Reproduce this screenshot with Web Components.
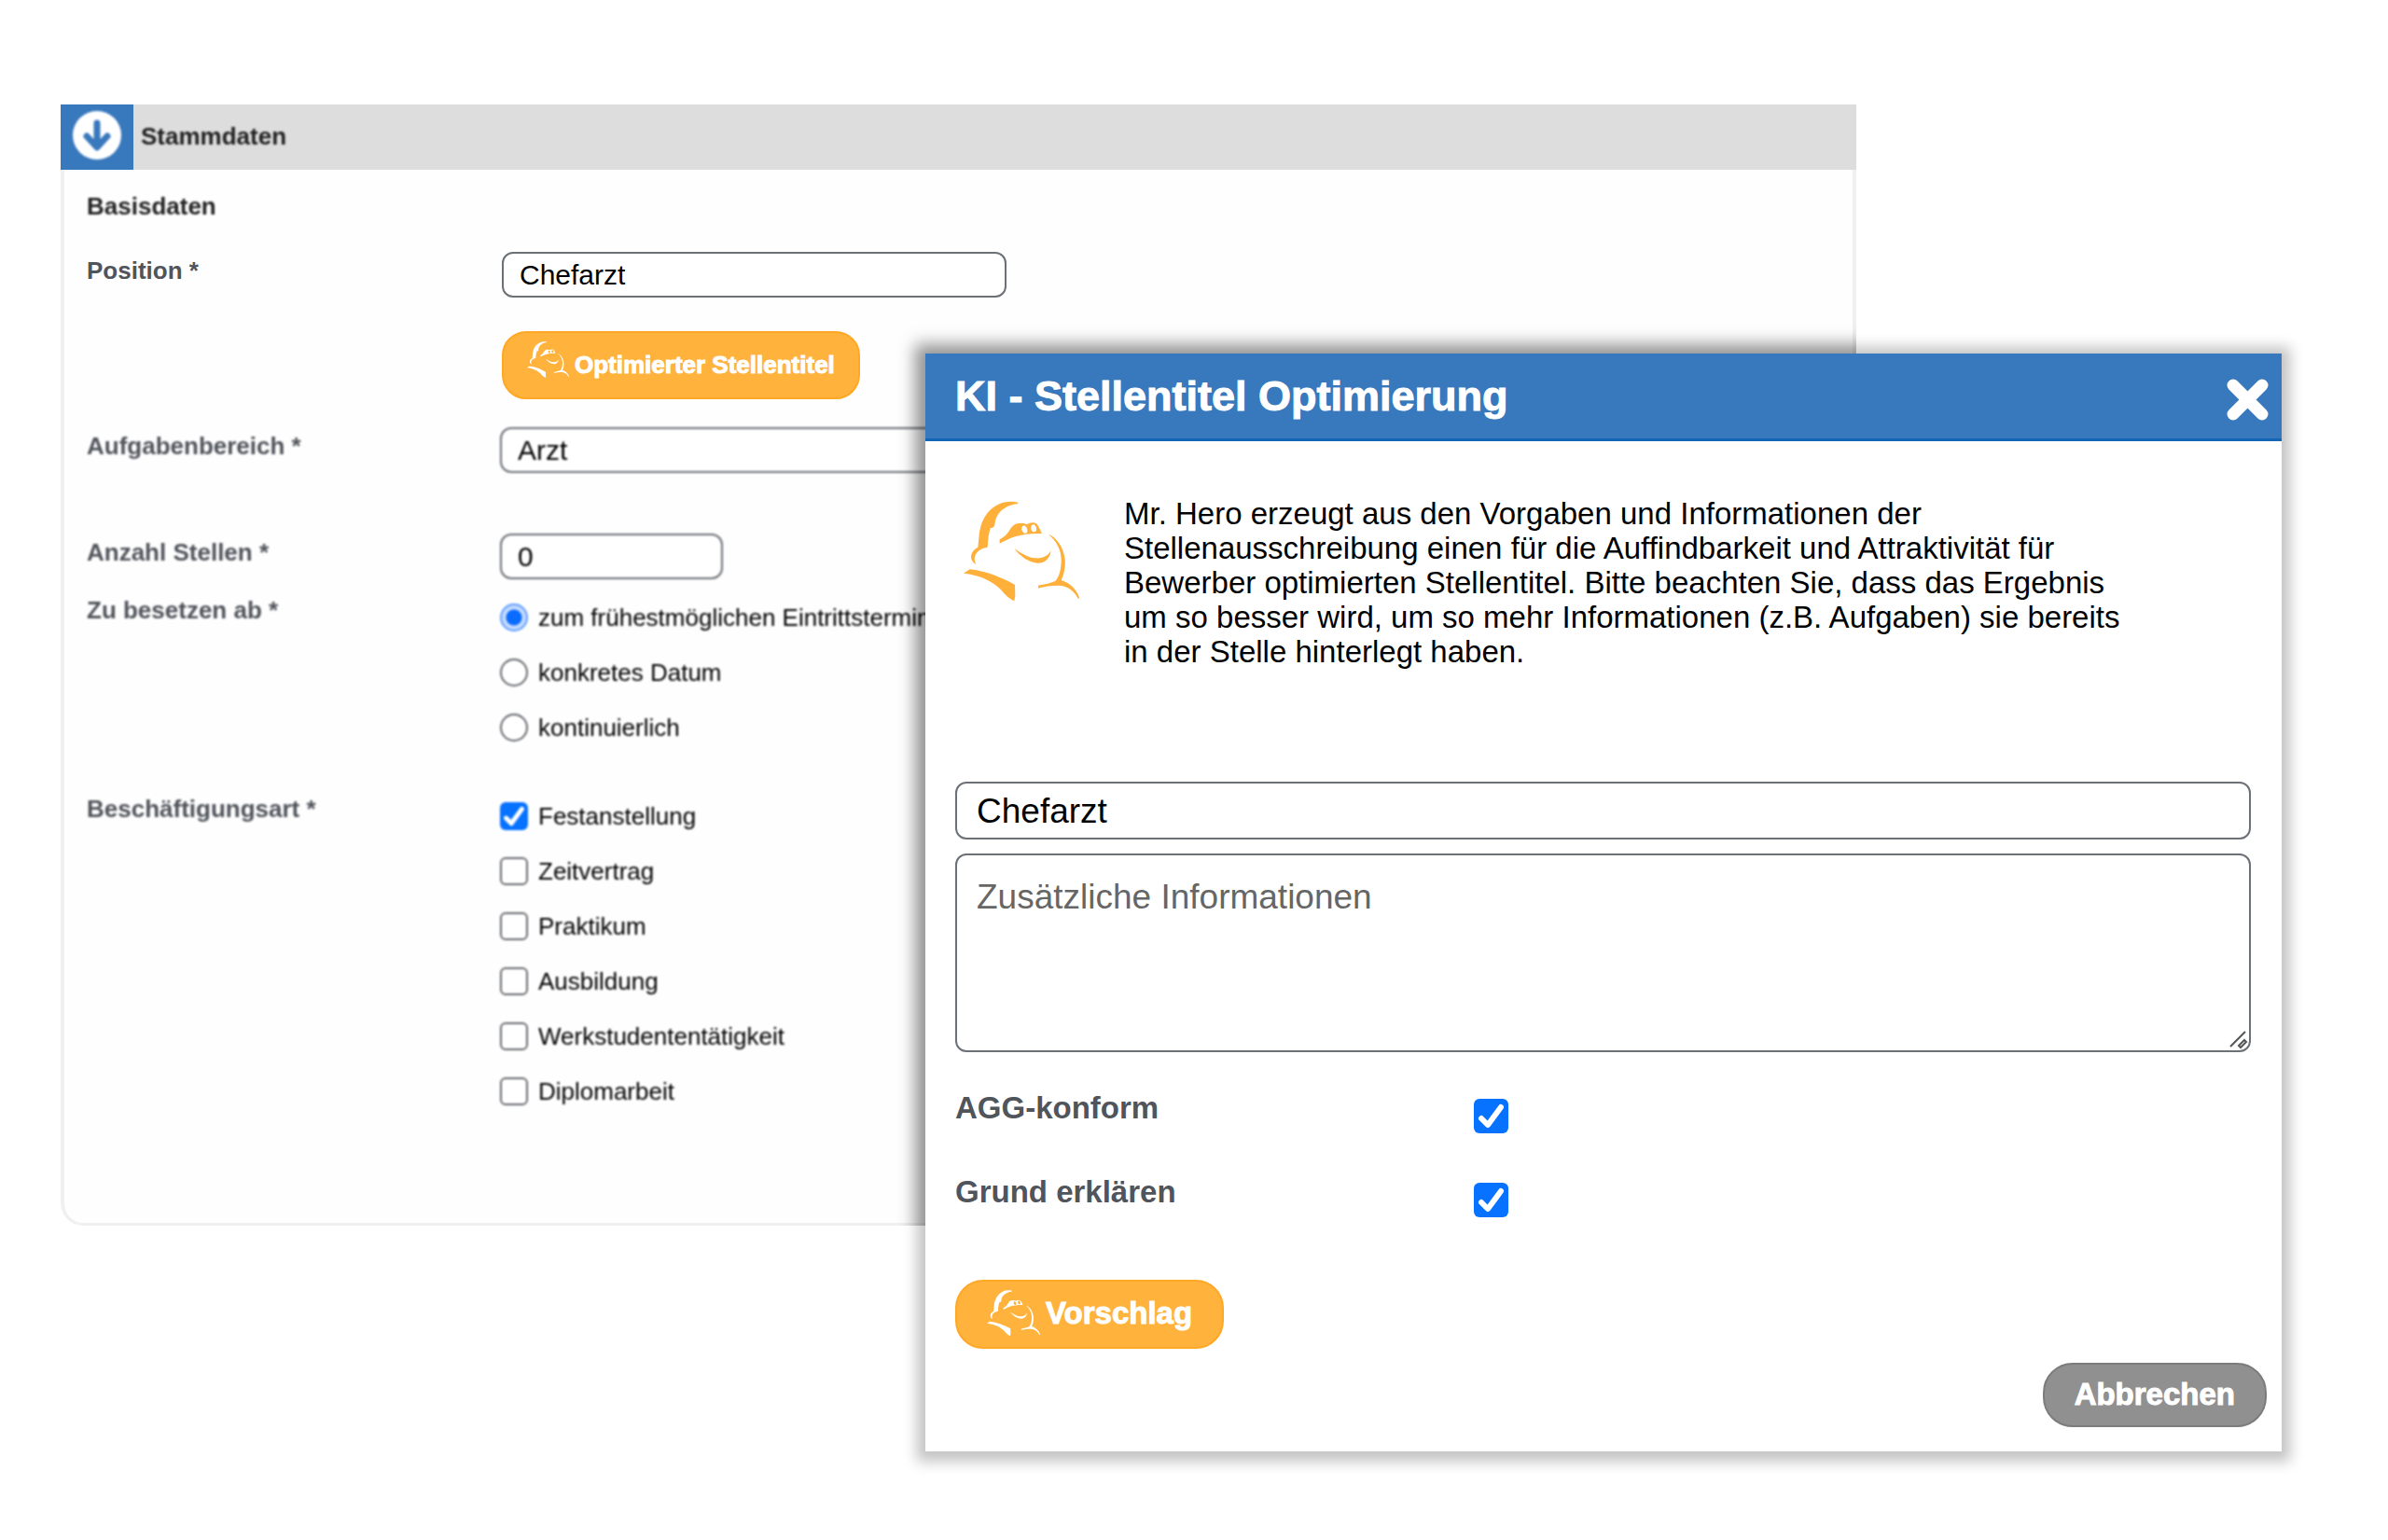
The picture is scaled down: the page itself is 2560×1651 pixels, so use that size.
<!DOCTYPE html>
<html lang="de">
<head>
<meta charset="utf-8">
<title>Stammdaten</title>
<style>
  body {
    margin: 0;
    min-height: 100vh;
    position: relative;
    background: #fff;
    color: #000;
    font-family: "Liberation Sans", Arial, sans-serif;
  }
  main {
    padding: 112px 65px;
  }
  .indent {
    margin: 36px 0 0 445px;
  }
</style>
</head>
<body>

<main>
  <data-panel heading="Stammdaten" subheading="Basisdaten">
    <text-row value="Chefarzt" style="margin-top: 34px">Position *</text-row>
    <hero-button class="indent" size="small">Optimierter Stellentitel</hero-button>
    <text-row type="select" value="Arzt" soft style="margin-top: 30px">Aufgabenbereich *</text-row>
    <text-row size="short" value="0" soft style="margin-top: 65px">Anzahl Stellen *</text-row>
    <choice-group type="radio" value="zum frühestmöglichen Eintrittstermin"
      options="zum frühestmöglichen Eintrittstermin|konkretes Datum|kontinuierlich"
      style="margin-top: 11px">Zu besetzen ab *</choice-group>
    <choice-group type="checkbox" value="Festanstellung"
      options="Festanstellung|Zeitvertrag|Praktikum|Ausbildung|Werkstudententätigkeit|Diplomarbeit"
      style="margin-top: 36px">Beschäftigungsart *</choice-group>
  </data-panel>
</main>

<hero-dialog heading="KI - Stellentitel Optimierung">
  <span slot="intro">Mr. Hero erzeugt aus den Vorgaben und Informationen der Stellenausschreibung einen für die Auffindbarkeit und Attraktivität für Bewerber optimierten Stellentitel. Bitte beachten Sie, dass das Ergebnis um so besser wird, um so mehr Informationen (z.B. Aufgaben) sie bereits in der Stelle hinterlegt haben.</span>
  <check-row>AGG-konform</check-row>
  <check-row>Grund erklären</check-row>
  <hero-button slot="action">Vorschlag</hero-button>
</hero-dialog>

<script>
const CHECK_STYLE = `
  input[type=checkbox], input[type=radio] {
    appearance: none;
    box-sizing: border-box;
    flex: none;
    margin: 0;
    width: 30px;
    height: 30px;
    border: 2px solid #66696e;
    border-radius: 6px;
    background: #fff center / 100% no-repeat;
  }
  input[type=checkbox]:checked {
    border: 0;
    background-color: #0672ff;
    background-image: url("data:image/svg+xml,%3Csvg xmlns='http://www.w3.org/2000/svg' viewBox='0 0 37 37'%3E%3Cpath d='M8 21l7 7L29 9' fill='none' stroke='white' stroke-width='6' stroke-linecap='round' stroke-linejoin='round'/%3E%3C/svg%3E");
  }
  input[type=radio] {
    border-radius: 50%;
  }
  input[type=radio]:checked {
    border-color: #5f9dff;
    background: radial-gradient(circle, #0a6cff 8px, #c4daff 9px);
  }
`;

class BaseElement extends HTMLElement {
  connectedCallback() {
    if (this.shadowRoot) return;
    const template = document.createElement('template');
    template.innerHTML = this.render();
    this.attachShadow({ mode: 'open' });
    this.shadowRoot.appendChild(template.content.cloneNode(true));
  }
}

// Mr. Hero, drawn in the current text colour
class HeroIcon extends BaseElement {
  render() {
    return `
      <style>
        :host { display: block; flex: none; width: 124px; }
        svg { display: block; width: 100%; height: auto; fill: currentColor; }
      </style>
      <svg viewBox="70 80 372 322" fill-rule="evenodd" aria-hidden="true">
        <path d="M245 85C225 80 200 82 180 92C145 110 122 145 119 200L116 229C98 238 90 255 96 270C99 277 105 282 110 284C104 272 103 258 112 247C120 236 133 232 147 229C148 205 151 185 156 167C161 168 166 166 169 160C172 150 171 140 178 128C190 106 215 92 245 89Z"/>
        <path d="M186 217V204C200 198 212 185 222 168C230 156 240 151 255 152C262 151 270 153 274 156C282 149 295 147 304 153C311 160 316 173 322 185C290 184 260 187 235 195C215 202 200 210 186 217ZM257 168C258 161 263 158 268 161C274 165 277 175 274 181C270 187 263 184 260 179C258 176 256 172 257 168ZM287 164C288 157 294 154 298 157C304 161 306 171 303 177C299 182 292 180 289 175C287 172 286 168 287 164Z"/>
        <path d="M233 233C255 248 275 262 300 264C325 267 342 256 351 240C348 262 335 279 312 280C282 281 252 258 233 233Z"/>
        <path d="M342 187C370 197 392 230 396 268C398 295 392 318 384 335C410 343 435 365 442 391L439 396C428 372 405 352 375 352C350 352 330 355 310 361V352C330 347 350 345 366 337C378 322 384 300 384 270C384 235 367 207 342 187Z"/>
        <path d="M70 313L90 300C140 305 190 325 235 350L236 385L233 402C215 395 205 383 190 366C165 338 120 318 70 313Z"/>
      </svg>
    `;
  }
}

class HeroButton extends BaseElement {
  render() {
    return `
      <style>
        :host { display: block; }
        button {
          display: flex;
          align-items: center;
          gap: 6px;
          box-sizing: border-box;
          height: 74px;
          padding: 0 32px 2px;
          border: 2px solid #ffa826;
          border-radius: 30px;
          background: #ffb23c;
          color: #fff;
          font: bold 33px/38px "Liberation Sans", Arial, sans-serif;
          white-space: nowrap;
          -webkit-text-stroke: 1px #fff;
        }
        hero-icon { width: 57px; }
        :host([size=small]) button {
          height: 73px;
          padding: 0 25px 2px;
          border-radius: 26px;
          font-size: 26px;
          line-height: 30px;
        }
        :host([size=small]) hero-icon { width: 45px; margin-bottom: 10px; }
      </style>
      <button type="button"><hero-icon></hero-icon><span><slot></slot></span></button>
    `;
  }
}

class DataPanel extends BaseElement {
  render() {
    return `
      <style>
        :host {
          display: block;
          box-sizing: border-box;
          position: relative;
          width: 79.2%;
          overflow: hidden;
          border-radius: 0 0 24px 24px;
          background: #fefefe;
        }
        header {
          display: flex;
          align-items: center;
          gap: 8px;
          height: 70px;
          background: #ddd;
          color: #222;
        }
        header button {
          width: 78px;
          height: 70px;
          padding: 0;
          border: 0;
          background: #3878bc;
        }
        svg { display: block; margin: 0 auto 4px; filter: blur(1px); }
        h2, h3 {
          margin: 0;
          font-size: 26px;
          line-height: 30px;
          filter: blur(1px);
        }
        h2 { padding-bottom: 2px; }
        h3 { color: #222; }
        .body {
          padding: 24px 24px 112px;
          border: 4px solid #f0f0f0;
          border-width: 0 4px 3px;
          border-radius: 0 0 24px 24px;
        }
        /* darker part of the dialog's shadow, seen only on the panel */
        .shade {
          position: absolute;
          z-index: 1;
          top: 267px;
          left: calc(38.75vw - 65px);
          right: -500px;
          bottom: -300px;
          box-shadow: 0 0 18px 12px rgba(0, 0, 0, .24);
        }
      </style>
      <header>
        <button type="button" aria-label="Einklappen">
          <svg width="52" height="52" viewBox="0 0 52 52">
            <circle cx="26" cy="26" r="26" fill="#fff"/>
            <path d="M26 13V38M15 27L26 39L37 27" fill="none" stroke="#3878bc" stroke-width="7" stroke-linecap="round" stroke-linejoin="round"/>
          </svg>
        </button>
        <h2>${this.getAttribute('heading')}</h2>
      </header>
      <div class="body">
        <h3>${this.getAttribute('subheading')}</h3>
        <slot></slot>
      </div>
      <div class="shade"></div>
    `;
  }
}

class TextRow extends BaseElement {
  render() {
    const value = this.getAttribute('value');
    const field = this.getAttribute('type') === 'select'
      ? `<select id="field"><option>${value}</option></select>`
      : `<input id="field" type="text" value="${value}">`;
    return `
      <style>
        :host {
          display: grid;
          grid-template-columns: 445px 1fr;
          align-items: start;
        }
        :host([soft]) {
          grid-template-columns: 443px 1fr;
          filter: blur(1px);
        }
        label {
          padding-top: 5px;
          color: #50545b;
          font-weight: bold;
          font-size: 26px;
          line-height: 30px;
        }
        input, select {
          appearance: none;
          box-sizing: border-box;
          width: 541px;
          height: 49px;
          padding: 0 17px;
          border: 2px solid #6c7077;
          border-radius: 12px;
          background: #fff;
          color: #000;
          font: 30px/34px "Liberation Sans", Arial, sans-serif;
        }
        :host([size=short]) input { width: 239px; }
      </style>
      <label for="field"><slot></slot></label>
      ${field}
    `;
  }
}

class ChoiceGroup extends BaseElement {
  render() {
    const type = this.getAttribute('type');
    const value = this.getAttribute('value');
    const items = this.getAttribute('options').split('|').map((text) => `
      <label><input type="${type}" name="choice" ${text === value ? 'checked' : ''}>${text}</label>
    `).join('');
    return `
      <style>
        ${CHECK_STYLE}
        :host {
          display: grid;
          grid-template-columns: 443px 1fr;
          filter: blur(1px);
          font-size: 26px;
          line-height: 30px;
        }
        .title {
          padding-top: 7px;
          color: #50545b;
          font-weight: bold;
        }
        label {
          display: flex;
          align-items: center;
          gap: 11px;
          height: 59px;
          color: #000;
          white-space: nowrap;
        }
      </style>
      <div class="title" id="title"><slot></slot></div>
      <div role="group" aria-labelledby="title">${items}</div>
    `;
  }
}

class CheckRow extends BaseElement {
  render() {
    return `
      <style>
        ${CHECK_STYLE}
        :host {
          display: grid;
          grid-template-columns: 40% 1fr;
          align-items: start;
          height: 90px;
        }
        label {
          color: #50545b;
          font-weight: bold;
          font-size: 33px;
          line-height: 38px;
        }
        input[type=checkbox] { width: 37px; height: 37px; margin-top: 9px; }
      </style>
      <label for="check"><slot></slot></label>
      <input id="check" type="checkbox" checked>
    `;
  }
}

class HeroDialog extends BaseElement {
  render() {
    return `
      <style>
        :host {
          display: block;
          position: absolute;
          z-index: 2;
          top: 379px;
          left: 38.75%;
          right: 114px;
          background: #fff;
          box-shadow: 0 2px 14px 9px rgba(0, 0, 0, .24);
        }
        header {
          display: flex;
          align-items: center;
          justify-content: space-between;
          box-sizing: border-box;
          height: 94px;
          padding: 0 14px 0 32px;
          border-bottom: 3px solid #1366b6;
          background: #3878bc;
          color: #fff;
        }
        h1 {
          margin: 0;
          font-size: 45px;
          line-height: 52px;
          -webkit-text-stroke: 1px #fff;
        }
        button { padding: 0; border: 0; background: none; color: #fff; }
        svg { display: block; margin-top: 6px; }
        .content { padding: 59px 33px 0 32px; }
        .intro { display: flex; align-items: flex-start; gap: 48px; padding-left: 9px; }
        .intro hero-icon { margin-top: 5px; color: #ffb03a; }
        p {
          margin: 0;
          max-width: 1084px;
          font-size: 33px;
          line-height: 37px;
        }
        input, textarea {
          display: block;
          box-sizing: border-box;
          width: 100%;
          margin: 0;
          border: 2px solid #6c7077;
          border-radius: 12px;
          background: #fff;
          color: #000;
          font: 37px/42px "Liberation Sans", Arial, sans-serif;
        }
        input { height: 62px; margin-top: 121px; padding: 2px 21px 0; }
        textarea { height: 213px; margin-top: 15px; padding: 24px 21px; resize: none; }
        ::placeholder { color: #666; opacity: 1; }
        .area { position: relative; }
        /* resize grip in the corner of the text area */
        .area svg { position: absolute; right: 3px; bottom: 3px; margin: 0; }
        .checks { padding: 41px 0 23px; }
        footer { display: flex; justify-content: flex-end; padding: 15px 16px 26px; }
        .cancel {
          height: 69px;
          padding: 0 32px 2px;
          border: 2px solid #7c7c7c;
          border-radius: 32px;
          background: #909090;
          font: bold 33px/38px "Liberation Sans", Arial, sans-serif;
          -webkit-text-stroke: 1px #fff;
        }
      </style>
      <header>
        <h1>${this.getAttribute('heading')}</h1>
        <button type="button" aria-label="Schließen">
          <svg width="46" height="46" viewBox="0 0 46 46">
            <path d="M8 8L39 39M39 8L8 39" stroke="#fff" stroke-width="13" stroke-linecap="round"/>
          </svg>
        </button>
      </header>
      <div class="content">
        <div class="intro">
          <hero-icon></hero-icon>
          <p><slot name="intro"></slot></p>
        </div>
        <input type="text" value="Chefarzt" aria-label="Stellentitel">
        <div class="area">
          <textarea placeholder="Zusätzliche Informationen" aria-label="Zusätzliche Informationen"></textarea>
          <svg width="20" height="20" viewBox="0 0 20 20" fill="none" stroke="#555" stroke-width="2">
            <path d="M1 17L17 1M10 16L16 10L18 12L12 18Z"/>
          </svg>
        </div>
        <div class="checks"><slot></slot></div>
        <slot name="action"></slot>
      </div>
      <footer><button class="cancel" type="button">Abbrechen</button></footer>
    `;
  }
}

customElements.define('hero-icon', HeroIcon);
customElements.define('hero-button', HeroButton);
customElements.define('data-panel', DataPanel);
customElements.define('text-row', TextRow);
customElements.define('choice-group', ChoiceGroup);
customElements.define('check-row', CheckRow);
customElements.define('hero-dialog', HeroDialog);
</script>
</body>
</html>
